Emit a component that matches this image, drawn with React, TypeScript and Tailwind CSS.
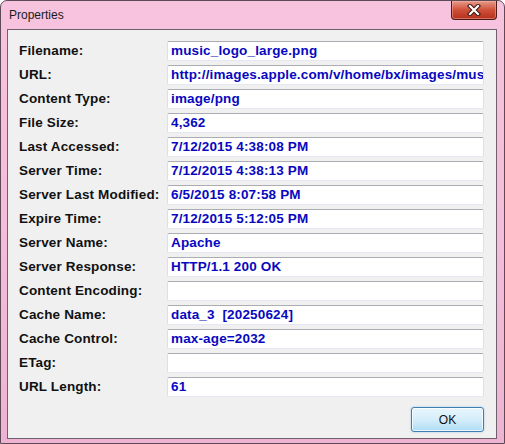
import React from "react";

const rows: [string, string][] = [
  ["Filename:", "music_logo_large.png"],
  ["URL:", "http://images.apple.com/v/home/bx/images/mus"],
  ["Content Type:", "image/png"],
  ["File Size:", "4,362"],
  ["Last Accessed:", "7/12/2015 4:38:08 PM"],
  ["Server Time:", "7/12/2015 4:38:13 PM"],
  ["Server Last Modified:", "6/5/2015 8:07:58 PM"],
  ["Expire Time:", "7/12/2015 5:12:05 PM"],
  ["Server Name:", "Apache"],
  ["Server Response:", "HTTP/1.1 200 OK"],
  ["Content Encoding:", ""],
  ["Cache Name:", "data_3  [20250624]"],
  ["Cache Control:", "max-age=2032"],
  ["ETag:", ""],
  ["URL Length:", "61"],
];

function CloseGlyph() {
  return (
    <svg width="14" height="12" viewBox="0 0 14 12">
      <path d="M3 2 L11 10 M11 2 L3 10" stroke="#3a1410" strokeWidth="4.2" strokeLinecap="square" />
      <path d="M3 2 L11 10 M11 2 L3 10" stroke="#ffffff" strokeWidth="2.2" strokeLinecap="square" />
    </svg>
  );
}

export default function App() {
  return (
    <div className="w-[505px] h-[444px] relative flex flex-col border border-[#5e4a57] rounded-t-[7px] bg-gradient-to-b from-[#f7c3de] via-[#f4bddb] to-[#eeb3d2] font-['Liberation_Sans',Arial,sans-serif] overflow-hidden">
      <div className="h-[28px] shrink-0 flex items-center pl-[8px] pb-[1px]">
        <span className="text-[12px] text-[#1b1b1b]">Properties</span>
      </div>
      <div className="absolute top-0 right-[7px] w-[46px] h-[19px] rounded-b-[4px] border border-t-0 border-[#4a1c18] bg-gradient-to-b from-[#e59a8b] via-[#cf4f38] to-[#b52f1c] flex items-center justify-center shadow-[inset_0_0_0_1px_rgba(255,190,170,0.45)]">
        <CloseGlyph />
      </div>
      <div className="ml-[6px] mr-[7px] h-[410px] border border-[#6f6169] bg-[#f0f0f0] flex flex-col pl-[11px] pr-[12px] pt-[11px]">
        <div className="grid grid-cols-[148px_317px] gap-y-[4px]">
          {rows.map(([label, value]) => (
            <React.Fragment key={label}>
              <div className="h-[20px] flex items-center text-[13.5px] font-bold tracking-[0.15px] text-[#111111] whitespace-nowrap">
                {label}
              </div>
              <div className="h-[20px] bg-white border border-[#dde1e7] border-t-[#abadb3] border-b-[#e3e9ef] rounded-[2px] flex items-center pl-[3px] overflow-hidden">
                <div className="whitespace-pre text-[13.5px] font-bold tracking-[0.15px] text-[#0808c0] leading-[18px]">
                  {value}
                </div>
              </div>
            </React.Fragment>
          ))}
        </div>
        <div className="flex justify-end mt-[10px]">
          <div className="w-[73px] h-[25px] rounded-[3px] border border-[#3c7fb1] bg-gradient-to-b from-[#e8f5fc] via-[#d5eefb] to-[#aedcf4] shadow-[inset_0_0_0_1px_rgba(255,255,255,0.75),0_0_2px_rgba(80,170,230,0.6)] flex items-center justify-center text-[12px] text-[#111111]">
            OK
          </div>
        </div>
      </div>
    </div>
  );
}
